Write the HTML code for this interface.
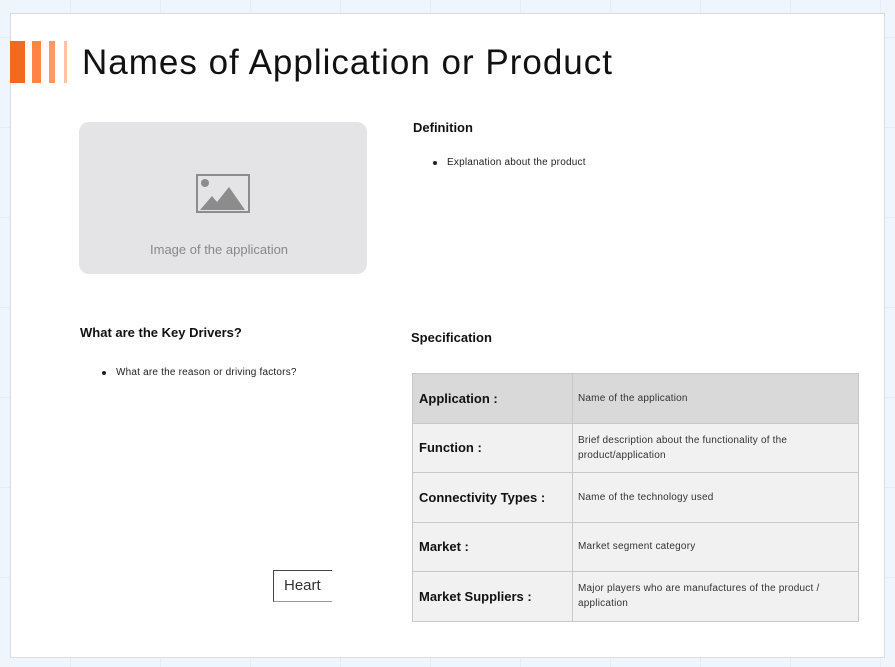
<!DOCTYPE html>
<html><head><style>
*{margin:0;padding:0;box-sizing:border-box}
body{width:895px;height:667px;overflow:hidden;position:relative;font-family:"Liberation Sans",sans-serif;
background-color:#eef5fc;
background-image:linear-gradient(#e3ecf7 1px,transparent 1px),linear-gradient(90deg,#e3ecf7 1px,transparent 1px);
background-size:90px 90px;background-position:70px 37px}
.card{position:absolute;left:10px;top:13px;width:875px;height:645px;background:#fff;border:1px solid #dcdcdc}
.a{position:absolute}
.bar{position:absolute;top:41px;height:42px}
h1{position:absolute;left:82px;top:43px;font-size:35px;font-weight:normal;color:#111;letter-spacing:1px}
.h{font-size:13px;font-weight:bold;color:#111}
.li{font-size:10px;color:#222;letter-spacing:0.2px}
.li:before{content:"";position:absolute;left:-14px;top:4px;width:4px;height:4px;border-radius:50%;background:#222}
table{position:absolute;left:412px;top:373px;width:447px;border-collapse:collapse}
td{border:1px solid #c8c8c8;height:49.5px;background:#f1f1f1;vertical-align:middle}
tr:first-child td{background:#d9d9d9}
td.k{width:160px;padding-left:6px;font-size:13px;font-weight:bold;color:#111}
td.v{padding-left:5px;font-size:10px;color:#333;line-height:15px;letter-spacing:0.2px}
</style></head><body>
<div class="card"></div>
<div class="bar" style="left:10px;width:15px;background:#f26a1f"></div>
<div class="bar" style="left:32px;width:9px;background:#ff8446"></div>
<div class="bar" style="left:49px;width:6px;background:#ff9a68"></div>
<div class="bar" style="left:64px;width:3px;background:#ffc4a5"></div>
<h1>Names of Application or Product</h1>
<div class="a" style="left:79px;top:122px;width:288px;height:152px;background:#e4e4e6;border-radius:10px"></div>
<svg class="a" style="left:196px;top:174px" width="54" height="40" viewBox="0 0 54 40">
<rect x="1" y="1" width="52" height="37" fill="none" stroke="#8c8c8c" stroke-width="2"/>
<circle cx="9" cy="9" r="4" fill="#8c8c8c"/>
<path d="M4 36 L16 22 L21 28 L33 13 L49 36 Z" fill="#8c8c8c"/></svg>
<div class="a" style="left:150px;top:242px;font-size:13px;color:#888">Image of the application</div>
<div class="a h" style="left:413px;top:120px">Definition</div>
<div class="a li" style="left:447px;top:157px">Explanation about the product</div>
<div class="a h" style="left:80px;top:325px">What are the Key Drivers?</div>
<div class="a li" style="left:116px;top:367px">What are the reason or driving factors?</div>
<div class="a h" style="left:411px;top:330px">Specification</div>
<table>
<tr><td class="k">Application :</td><td class="v">Name of the application</td></tr>
<tr><td class="k">Function :</td><td class="v">Brief description about the functionality of the product/application</td></tr>
<tr><td class="k">Connectivity Types :</td><td class="v">Name of the technology used</td></tr>
<tr><td class="k">Market :</td><td class="v">Market segment category</td></tr>
<tr><td class="k">Market Suppliers :</td><td class="v">Major players who are manufactures of the product / application</td></tr>
</table>
<div class="a" style="left:273px;top:570px;width:59px;height:32px;border-left:1px solid #444;border-top:1px solid #444;border-bottom:1px solid #999;padding:6px 0 0 10px;font-size:15px;color:#333">Heart</div>
</body></html>
